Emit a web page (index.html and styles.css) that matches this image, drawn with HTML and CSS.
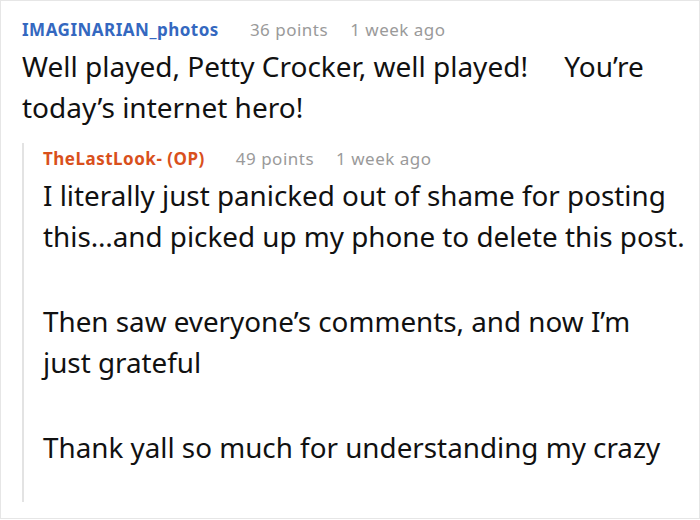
FILE: index.html
```html
<!DOCTYPE html>
<html>
<head>
<meta charset="utf-8">
<link rel="stylesheet" href="styles.css">
</head>
<body>
<div class="frame">
  <div class="comment">
    <div class="meta">
      <span class="user user-blue">IMAGINARIAN_photos</span>
      <span class="info">36 points</span>
      <span class="info">1 week ago</span>
    </div>
    <div class="text">
      <p>Well played, Petty Crocker, well played!&nbsp;&nbsp;&nbsp;&nbsp; You’re<br>today’s internet hero!</p>
    </div>
    <div class="reply">
      <div class="meta">
        <span class="user user-orange">TheLastLook- (OP)</span>
        <span class="info">49 points</span>
        <span class="info">1 week ago</span>
      </div>
      <div class="text">
        <p>I literally just panicked out of shame for posting<br>this…and picked up my phone to delete this post.</p>
        <p>Then saw everyone’s comments, and now I’m<br>just grateful</p>
        <p>Thank yall so much for understanding my crazy</p>
      </div>
    </div>
  </div>
</div>
</body>
</html>
```
FILE: styles.css
```css
html, body {
  margin: 0;
  padding: 0;
  background: #fff;
}
.frame {
  width: 700px;
  height: 519px;
  box-sizing: border-box;
  border: 1px solid #e6e6e6;
  overflow: hidden;
  font-family: "Noto Sans", sans-serif;
}
.comment {
  padding: 13px 2px 0 21px;
}
.meta {
  display: flex;
  align-items: baseline;
  font-size: 17px;
  line-height: 32px;
  letter-spacing: 0.5px;
  white-space: nowrap;
}
.user {
  font-weight: bold;
  margin-right: 31px;
}
.user-blue { color: #3468c0; }
.user-orange { color: #d9501c; }
.info {
  color: #9a9a9a;
  margin-right: 22px;
}
.text {
  font-size: 28px;
  line-height: 41px;
  color: #111;
}
.reply .text {
  font-size: 27.8px;
}
.text p {
  margin: 0;
}
.text p + p {
  margin-top: 44px;
}
.reply {
  margin-top: 27px;
  border-left: 2px solid #e3e3e3;
  padding-left: 19px;
  padding-bottom: 34px;
}
.reply .meta {
  margin-top: -12px;
}
```
